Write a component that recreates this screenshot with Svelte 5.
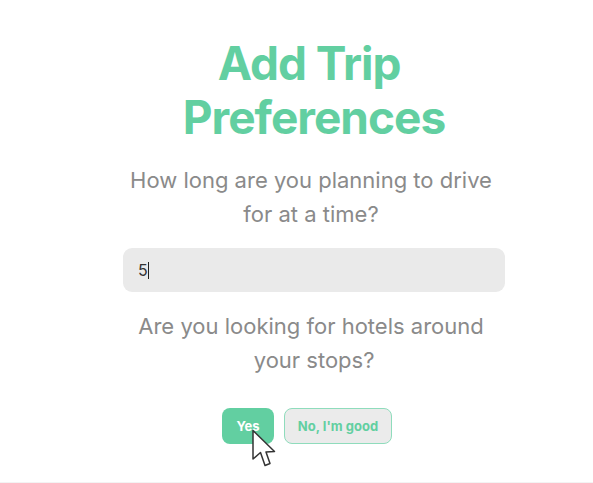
<script>
	let hours = "5";
</script>

<div class="page">
	<h1>Add Trip&nbsp;<br />Preferences</h1>
	<p class="question first">How long are you planning to drive<br />for at a time?</p>
	<div class="field">
		<span class="value">{hours}</span><span class="caret"></span>
	</div>
	<p class="question second">Are you looking for hotels around<br />&nbsp;your stops?</p>
	<div class="buttons">
		<button class="yes">
			Yes
			<svg class="cursor" width="26" height="40" viewBox="0 0 26 40">
				<path d="M2 2.5 L2 31 L9.5 24.5 L14 37.5 L19 35.5 L15 24 L23.5 23.5 Z" fill="#fff" stroke="#333" stroke-width="1.5" stroke-linejoin="round" />
			</svg>
		</button>
		<button class="no">No, I'm good</button>
	</div>
	<div class="rule"></div>
</div>

<style>
	:global(body) {
		margin: 0;
		background: #fff;
	}

	.page {
		width: 593px;
		height: 483px;
		box-sizing: border-box;
		padding: 36px 0 0 35px;
		display: flex;
		flex-direction: column;
		align-items: center;
		font-family: Inter, "Liberation Sans", sans-serif;
		overflow: hidden;
		position: relative;
	}

	h1 {
		margin: 0;
		font-size: 46px;
		line-height: 54px;
		font-weight: 700;
		letter-spacing: -1px;
		color: #62cfa1;
		text-align: center;
	}

	.question {
		margin: 0 6px 0 0;
		font-size: 22px;
		line-height: 34px;
		font-weight: 400;
		color: #8a8a8a;
		text-align: center;
	}

	.first {
		margin-top: 19px;
	}

	.second {
		margin-top: 17px;
	}

	.field {
		width: 382px;
		height: 44px;
		margin-top: 17px;
		box-sizing: border-box;
		padding-left: 15px;
		background: #eaeaea;
		border-radius: 9px;
		display: flex;
		align-items: center;
		font-size: 16px;
		color: #333;
	}

	.caret {
		width: 1.5px;
		height: 17px;
		background: #222;
	}

	.buttons {
		display: flex;
		gap: 10px;
		margin-top: 31px;
		margin-right: 14px;
	}

	button {
		height: 36px;
		box-sizing: border-box;
		border-radius: 8px;
		font-family: inherit;
		font-size: 13px;
		font-weight: 700;
		padding: 0;
	}

	.yes {
		width: 52px;
		border: none;
		background: #62cfa1;
		color: #fff;
		position: relative;
	}

	.no {
		width: 108px;
		border: 1px solid #8fdcbc;
		background: #ebebeb;
		color: #62cfa1;
	}

	.cursor {
		position: absolute;
		left: 29px;
		top: 20px;
	}

	.rule {
		position: absolute;
		left: 0;
		right: 0;
		bottom: 0;
		height: 1px;
		background: #f3f3f3;
	}
</style>
